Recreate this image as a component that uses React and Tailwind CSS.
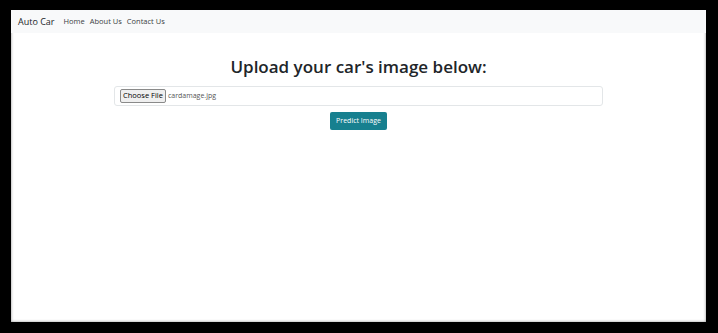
const App = () => {
  return (
    <div className="h-[333px] w-[718px] bg-black pb-[11px] pl-[11px] pr-[12px] pt-[10px]" style={{ fontFamily: "'Open Sans', 'Noto Sans', sans-serif" }}>
      <div className="flex h-full w-full flex-col bg-white shadow-[inset_0_0_3px_rgba(0,0,0,0.45)]">
        <nav className="flex h-[23px] items-center bg-[#f8f9fa] pl-[7px] pt-[1px]">
          <span className="mr-[9px] text-[9px] text-[#212529]">Auto Car</span>
          <div className="flex gap-[5px] text-[7.5px] text-[#3b3f43]">
            <span>Home</span>
            <span>About Us</span>
            <span>Contact Us</span>
          </div>
        </nav>

        <main className="flex flex-col items-center pt-[21px]">
          <h1 className="text-[17px] font-semibold leading-[26px] text-[#212529]">
            Upload your car's image below:
          </h1>
          <div className="mt-[6px] flex h-[20px] w-[489px] items-center rounded-[3px] border border-[#e3e6e8] bg-white pl-[5px]">
            <span className="flex h-[14px] items-center rounded-[2px] border border-[#8a8a8a] bg-[#efefef] px-[2px] text-[7.5px] text-black">
              Choose File
            </span>
            <span className="ml-[2px] text-[7px] text-[#555]">cardamage.jpg</span>
          </div>
          <button className="mt-[6px] flex h-[18px] items-center rounded-[2px] bg-[#17808f] px-[6px] text-[7px] text-white">
            Predict Image
          </button>
        </main>
      </div>
    </div>
  );
};

export default App;
